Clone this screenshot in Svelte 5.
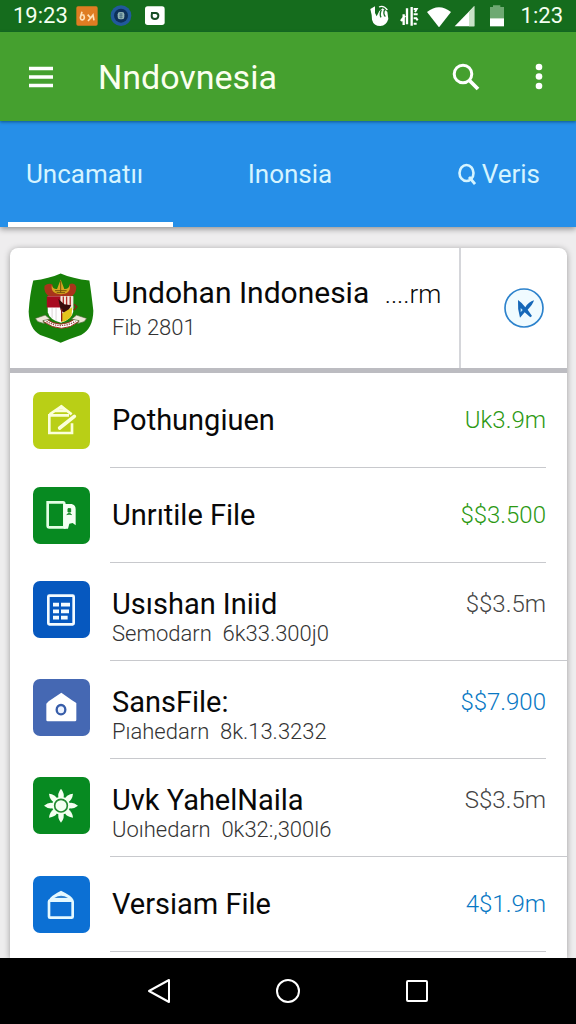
<script lang="ts">
	type Tone = 'green' | 'grey' | 'blue';

	interface FileRow {
		icon: string;
		tile: string;
		title: string;
		detail?: string;
		amount: string;
		tone: Tone;
		wide?: boolean;
	}

	const tabs = [
		{ id: 'first', label: 'Uncamatıı' },
		{ id: 'second', label: 'Inonsia' },
		{ id: 'third', label: 'Veris', search: true }
	];

	const rows: FileRow[] = [
		{ icon: 'edit', tile: 'lime', title: 'Pothungiuen', amount: 'Uk3.9m', tone: 'green' },
		{ icon: 'door', tile: 'green', title: 'Unrıtile File', amount: '$$3.500', tone: 'green' },
		{ icon: 'sheet', tile: 'navy', title: 'Usıshan Iniid', detail: 'Semodarn  6k33.300j0', amount: '$$3.5m', tone: 'grey', wide: true },
		{ icon: 'house', tile: 'indigo', title: 'SansFile:', detail: 'Pıahedarn  8k.13.3232', amount: '$$7.900', tone: 'blue' },
		{ icon: 'sun', tile: 'green', title: 'Uvk YahelNaila', detail: 'Uoıhedarn  0k32:,300l6', amount: 'S$3.5m', tone: 'grey', wide: true },
		{ icon: 'box', tile: 'blue', title: 'Versiam File', amount: '4$1.9m', tone: 'blue' }
	];

	const petals = [0, 45, 90, 135, 180, 225, 270, 315];

	let activeTab = $state('first');
</script>

<div class="screen">
	<div class="status-bar">
		<span class="clock">19:23</span>
		<svg class="badge" viewBox="0 0 66 66" aria-hidden="true">
			<rect x="1" y="4" width="64" height="58" rx="5" fill="#df7d22" />
			<path d="M18 20l-5 18q1 9 8 6t2-14l-8 0M35 29l9 10-8 9M44 39l7-9 3 16" fill="none" stroke="#ffe2b8" stroke-width="5" />
		</svg>
		<svg class="badge" viewBox="0 0 66 66" aria-hidden="true">
			<circle cx="33" cy="32" r="31" fill="#21599b" />
			<circle cx="33" cy="32" r="21" fill="#0d3159" />
			<rect x="23" y="21" width="20" height="22" rx="7" fill="#93b5b4" />
			<path d="M28 27h10M28 32h10M28 37h10M33 23v18" stroke="#38607a" stroke-width="2" />
		</svg>
		<svg class="badge" viewBox="0 0 66 66" aria-hidden="true">
			<rect x="3" y="4" width="59" height="56" rx="8" fill="#fff" />
			<path d="M24 24h12q8 2 7 9-1 9-10 9-10 0-10-9z" fill="none" stroke="#174d25" stroke-width="6" />
		</svg>
		<span class="spacer"></span>
		<svg class="signals" viewBox="0 0 420 66" aria-hidden="true">
			<path d="M4 12l14-8v20l5 10 8-16 10-8 14 10 3 22q-6 20-24 21-20 0-25-19l-1-14z" fill="#fff" />
			<path d="M30 6q14-6 25 9" fill="none" stroke="#fff" stroke-width="4" />
			<path d="M37 14q-6 14-1 23M47 14q-6 12 2 21" fill="none" stroke="#176d24" stroke-width="4" />
			<path d="M96 48l12-16M104 28v32M114 10v48M128 6v56" fill="none" stroke="#fff" stroke-width="7" />
			<path d="M134 12h9l-5 9M134 28h12M134 40h8l4 6M134 56h9" fill="none" stroke="#fff" stroke-width="6" />
			<path d="M174 21q36-28 72 0l-36 46z" fill="#fff" />
			<path d="M257 64l59-61v61z" fill="#fff" />
			<path d="M300 20l16-17v61h-16z" fill="#c9e3c7" />
			<path d="M363 6h9V1h22v5h11v35h-42z" fill="#6ea972" />
			<path d="M363 40h42v24h-42z" fill="#fff" />
		</svg>
		<span class="clock">1:23</span>
	</div>

	<header class="app-bar">
		<button type="button" class="icon-button" aria-label="Menu">
			<svg class="menu-icon" viewBox="0 0 24 24">
				<path d="M0 3.500h24M0 12h24M0 20.500h24" stroke="#fff" stroke-width="3.600" />
			</svg>
		</button>
		<h1>Nndovnesia</h1>
		<button type="button" class="icon-button" aria-label="Search">
			<svg class="search-icon" viewBox="0 0 28 28">
				<circle cx="11" cy="11" r="8.800" fill="none" stroke="#fff" stroke-width="3" />
				<path d="M17 17l9 9" stroke="#fff" stroke-width="3.800" />
			</svg>
		</button>
		<button type="button" class="icon-button" aria-label="More">
			<svg class="more-icon" viewBox="0 0 8 28">
				<circle cx="4" cy="4" r="3.300" fill="#fff" />
				<circle cx="4" cy="13.500" r="3.300" fill="#fff" />
				<circle cx="4" cy="23" r="3.300" fill="#fff" />
			</svg>
		</button>
	</header>

	<nav class="tabs">
		{#each tabs as tab (tab.id)}
			<button
				type="button"
				class="tab {tab.id}"
				class:active={activeTab === tab.id}
				aria-current={activeTab === tab.id ? 'page' : undefined}
				onclick={() => (activeTab = tab.id)}
			>
				{#if tab.search}
					<svg class="tab-icon" viewBox="0 0 18 22" aria-hidden="true">
						<ellipse cx="8.500" cy="10" rx="7" ry="8" fill="none" stroke="#d5f4ff" stroke-width="2.600" />
						<path d="M11 14l6 7" stroke="#d5f4ff" stroke-width="2.800" />
					</svg>
				{/if}
				{tab.label}
			</button>
		{/each}
	</nav>

	<main>
		<section class="card">
			<div class="summary">
				<svg class="crest" viewBox="0 0 200 215" aria-hidden="true">
					<path d="M16 24Q64 19 99 3q36 16 87 21 6 38 12 92-1 55-37 73-34 11-62 24-28-13-62-24Q4 172 2 118 6 62 16 24z" fill="#178009" />
					<path d="M50 40q12-10 24-4l4 24h42l6-25q14-6 20 7 2 19-13 30H63Q47 60 50 40z" fill="#a9341b" />
					<path d="M72 38q3 13 16 12l11-29 11 29q14 1 16-12 6 26-26 28-32-1-28-28z" fill="#d9a520" />
					<path d="M82 55h35M87 61h25M99 25v36" stroke="#74520a" stroke-width="3" />
					<path d="M59 72h78v47q-4 23-37 33-35-9-40-32z" fill="#fff" />
					<path d="M57 72h42v34H57z" fill="#a80b20" />
					<path d="M99 72h38v40l-20 15-18-17z" fill="#f3e8df" />
					<path d="M107 73v28M117 73v32M128 73v28" stroke="#b32a28" stroke-width="4" />
					<path d="M92 80l18 16 21 3-15 28-17-13z" fill="#370c0b" />
					<path d="M103 124l31-19-2 26q-10 15-32 19z" fill="#e3c51c" />
					<path d="M73 108v30M85 108v38" stroke="#c9bec0" stroke-width="2" />
					<path d="M102 110v38M140 96l8 8-9 10" fill="none" stroke="#8d1c13" stroke-width="4" />
					<path d="M50 137q48 39 98 0l6 11q-51 42-108 0z" fill="#fff" stroke="#a72f24" stroke-width="3" />
					<path d="M56 148q42 25 88 0" fill="none" stroke="#9a4a40" stroke-width="4" stroke-dasharray="4 3" />
					<path d="M22 139l30-10 15 12-22 5 5 9-20-6zM178 139l-31-10-15 12 23 5-5 9 20-6z" fill="#eee7d8" stroke="#496936" stroke-width="2" />
				</svg>
				<div class="summary-text">
					<h2>Undohan Indonesia <span>....rm</span></h2>
					<p>Fib 2801</p>
				</div>
				<button type="button" class="compass" aria-label="Open">
					<svg viewBox="0 0 120 120">
						<circle cx="60" cy="60" r="57" fill="#f0fbff" stroke="#2c82cc" stroke-width="5" />
						<path d="M42 36q12 8 22 22 10-17 26-21-3 12-19 28l13 19-5 4-17-15-14 16q-8-27-6-53z" fill="#1768b8" />
						<path d="M50 60v13l6-7z" fill="#c9eeff" />
					</svg>
				</button>
			</div>

			<ul class="rows">
				{#each rows as row}
					<li class="row" class:tall={row.detail}>
						<svg class="tile {row.tile}" viewBox="0 0 171 171" aria-hidden="true">
							{#if row.icon === 'edit'}
								<g fill="none" stroke="#fbffd9" stroke-width="8">
									<path d="M108 70H49v53h68V94" />
									<path d="M50 67l35-24 31 24M66 57h38" />
									<path d="M80 108l44-35" stroke-width="11" stroke-linecap="round" />
								</g>
								<path d="M72 53l13-15 17 15z" fill="#fbffd9" />
							{:else if row.icon === 'door'}
								<path d="M45 46h45q4 0 4 5v70H49q-5 0-5-5V46z" fill="none" stroke="#e3ffe4" stroke-width="8" />
								<path d="M92 51h24q12 3 12 16v48l-9-7-10 2-4 15H92z" fill="#f3fff3" />
								<path d="M105 65h8v10h-8zM101 83q8-8 15 0" fill="#148a25" stroke="#148a25" stroke-width="3" />
							{:else if row.icon === 'sheet'}
								<rect x="46" y="44" width="76" height="86" rx="3" fill="none" stroke="#f4fbff" stroke-width="8" />
								<path d="M60 71h18M84 71h27M60 91h18M84 91h24M60 110h18M84 110h20" stroke="#f4fbff" stroke-width="11" />
							{:else if row.icon === 'house'}
								<path d="M40 74l7-7 38-26 32 23 13 8v51q0 4-4 4H44q-4 0-4-4z" fill="#fff" />
								<ellipse cx="84" cy="92" rx="13" ry="14" fill="#edf3ff" stroke="#375da9" stroke-width="7" />
							{:else if row.icon === 'sun'}
								{#each petals as angle}
									<path d="M77 64q-5-14 7-29 12 15 7 29z" transform="rotate({angle} 84 86)" fill="#f4fff0" />
								{/each}
								<circle cx="84" cy="86" r="27" fill="#f4fff0" />
								<circle cx="84" cy="86" r="19" fill="none" stroke="#248b31" stroke-width="5" />
							{:else}
								<rect x="48" y="74" width="71" height="51" rx="3" fill="none" stroke="#e5f9ff" stroke-width="8" />
								<path d="M48 72q2-11 36-28 36 17 37 28z" fill="#e5f9ff" />
								<path d="M64 66q20-13 41 0z" fill="#3184d2" />
							{/if}
						</svg>
						<div class="row-body" class:wide={row.wide}>
							<div class="row-text">
								<h3>{row.title}</h3>
								{#if row.detail}
									<p>{row.detail}</p>
								{/if}
							</div>
							<span class="amount {row.tone}">{row.amount}</span>
						</div>
					</li>
				{/each}
			</ul>
		</section>
	</main>

	<footer class="system-nav">
		<button type="button" aria-label="Back">
			<svg viewBox="0 0 28 28">
				<path d="M24 3v22L4 14z" fill="none" stroke="#fff" stroke-width="2" stroke-linejoin="round" />
			</svg>
		</button>
		<button type="button" aria-label="Home">
			<svg viewBox="0 0 28 28">
				<circle cx="14" cy="14" r="11" fill="none" stroke="#fff" stroke-width="2" />
			</svg>
		</button>
		<button type="button" aria-label="Recent apps">
			<svg viewBox="0 0 28 28">
				<rect x="4" y="4" width="20" height="20" rx="1" fill="none" stroke="#fff" stroke-width="2" />
			</svg>
		</button>
	</footer>
</div>

<style>
	:global(body) {
		background: #eeedee;
	}

	.screen {
		min-height: 100vh;
		display: flex;
		flex-direction: column;
		font-family: Roboto, 'Liberation Sans', sans-serif;
		color: #080808;
	}

	h1,
	h2,
	h3,
	p,
	ul {
		margin: 0;
		padding: 0;
		font-weight: 400;
	}

	button {
		border: none;
		padding: 0;
		background: none;
		color: inherit;
		font: inherit;
		cursor: pointer;
	}

	svg {
		display: block;
		flex-shrink: 0;
	}

	.status-bar {
		height: 32px;
		display: flex;
		align-items: center;
		gap: 12px;
		padding: 0 13px;
		background: #156c1d;
		color: #f4fff0;
	}

	.clock {
		font-size: 22px;
		line-height: 32px;
	}

	.clock:first-child {
		margin-right: -4px;
	}

	.badge {
		width: 22px;
		height: 22px;
	}

	.spacer {
		flex: 1;
	}

	.signals {
		width: 140px;
		height: 22px;
	}

	.app-bar {
		position: relative;
		z-index: 1;
		height: 89px;
		display: flex;
		align-items: center;
		padding: 0 13px 0 17px;
		background: #45a02f;
		color: #fbffef;
		box-shadow: 0 1px 3px rgba(0, 50, 80, 0.6);
	}

	.icon-button {
		width: 48px;
		height: 48px;
		display: flex;
		align-items: center;
		justify-content: center;
	}

	.app-bar h1 {
		flex: 1;
		padding-left: 33px;
		font-size: 34px;
		line-height: 48px;
	}

	.icon-button + .icon-button {
		margin-left: 25px;
	}

	.menu-icon {
		width: 24px;
		height: 24px;
	}

	.search-icon {
		width: 28px;
		height: 28px;
	}

	.more-icon {
		width: 8px;
		height: 28px;
	}

	.tabs {
		height: 106px;
		display: grid;
		grid-template-columns: 1fr 1fr 1fr;
		padding: 0 8px;
		background: #268fe8;
		color: #d5f4ff;
		box-shadow: 0 2px 6px rgba(0, 0, 0, 0.4);
	}

	.tab {
		display: flex;
		align-items: center;
		justify-self: center;
		gap: 6px;
		padding: 0 20px 0 24px;
		font-size: 26px;
		line-height: 32px;
		border-top: 5px solid transparent;
		border-bottom: 5px solid transparent;
	}

	.tab.first {
		justify-self: start;
		padding: 0 30px 0 18px;
	}

	.tab.third {
		justify-self: end;
		padding: 0 28px 0 18px;
	}

	.tab.active {
		border-bottom-color: #fff;
	}

	.tab-icon {
		width: 18px;
		height: 22px;
	}

	main {
		flex: 1;
		display: flex;
		padding: 21px 9px 0 10px;
	}

	.card {
		flex: 1;
		min-width: 0;
		padding-bottom: 5px;
		background: #fff;
		border-radius: 8px 8px 0 0;
		box-shadow: 0 1px 6px rgba(0, 0, 0, 0.35);
	}

	.summary {
		height: 120px;
		display: flex;
		align-items: center;
		padding-left: 18px;
		border-bottom: 5px solid #bcbcc1;
	}

	.crest {
		width: 66px;
		height: 72px;
	}

	.summary-text {
		flex: 1;
		min-width: 0;
		padding-left: 18px;
	}

	h2,
	h3 {
		font-size: 30px;
		line-height: 34px;
		white-space: nowrap;
	}

	h3 {
		font-size: 29px;
	}

	h2 span {
		padding-left: 8px;
		font-size: 26px;
		font-weight: 300;
	}

	p {
		font-size: 22px;
		line-height: 26px;
		font-weight: 300;
		color: #333;
		white-space: pre;
	}

	.summary-text p {
		padding-top: 4px;
	}

	.compass {
		width: 108px;
		align-self: stretch;
		display: flex;
		align-items: center;
		justify-content: center;
		padding-left: 20px;
		border-left: 2px solid #d5d6da;
	}

	.compass svg {
		width: 40px;
		height: 40px;
	}

	.rows {
		list-style: none;
	}

	.row {
		display: flex;
		align-items: center;
		gap: 20px;
		padding-left: 23px;
	}

	.tile {
		width: 57px;
		height: 57px;
		border-radius: 7px;
	}

	.tile.lime {
		background: #b9cf16;
	}

	.tile.green {
		background: #078a21;
	}

	.tile.navy {
		background: #0658bf;
	}

	.tile.indigo {
		background: #4568b3;
	}

	.tile.blue {
		background: #0c70d4;
	}

	.row-body {
		flex: 1;
		min-width: 0;
		min-height: 94px;
		display: flex;
		align-items: center;
		justify-content: space-between;
		margin-right: 21px;
		padding-left: 2px;
		border-bottom: 1px solid #c8c9cd;
	}

	.row-body.wide {
		margin-right: 0;
		padding-right: 21px;
	}

	.tall {
		align-items: flex-start;
	}

	.tall .tile {
		margin-top: 18px;
	}

	.tall .row-body {
		min-height: 73px;
		align-items: flex-start;
		padding-top: 24px;
	}

	.amount {
		font-size: 24px;
		line-height: 34px;
		font-weight: 300;
	}

	.amount.green {
		color: #2c9913;
	}

	.amount.grey {
		color: #444;
	}

	.amount.blue {
		color: #0878c4;
	}

	.system-nav {
		height: 66px;
		display: flex;
		align-items: center;
		justify-content: center;
		gap: 81px;
		background: #000;
		position: relative;
	}

	.system-nav button {
		width: 48px;
		height: 48px;
		display: flex;
		align-items: center;
		justify-content: center;
	}

	.system-nav svg {
		width: 28px;
		height: 28px;
	}
</style>
